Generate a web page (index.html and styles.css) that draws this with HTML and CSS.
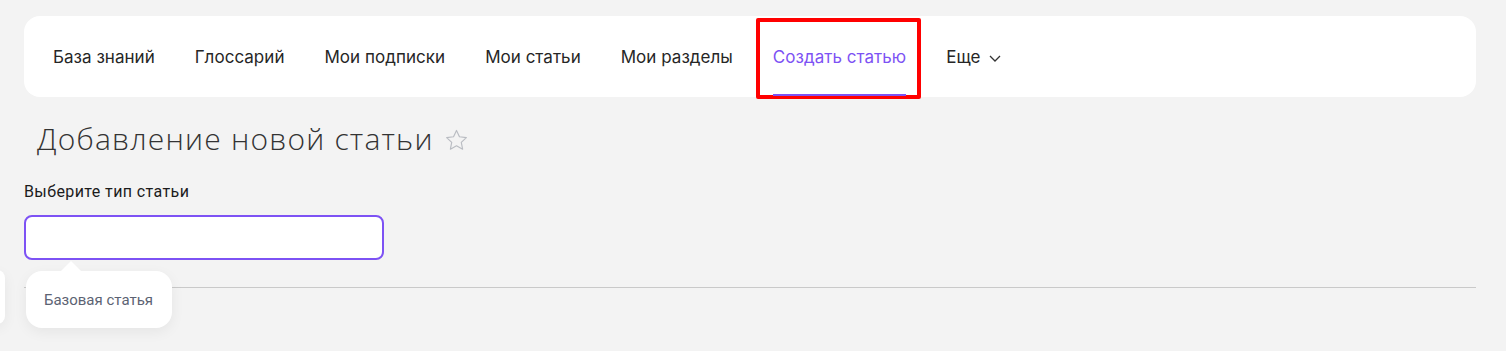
FILE: index.html
```html
<!DOCTYPE html>
<html>
<head>
    <title>Добавление новой статьи</title>
    <link rel="stylesheet" href="styles.css">
</head>
<body>
    <div class="page">
        <nav class="topnav">
            <a class="nav-item">База знаний</a>
            <a class="nav-item">Глоссарий</a>
            <a class="nav-item">Мои подписки</a>
            <a class="nav-item">Мои статьи</a>
            <a class="nav-item">Мои разделы</a>
            <a class="nav-item active">Создать статью<span class="highlight"></span></a>
            <a class="nav-item more">Еще
                <svg width="12" height="7" viewBox="0 0 12 7"><path d="M1 1l5 5 5-5" fill="none" stroke="#333" stroke-width="1.3"/></svg>
            </a>
        </nav>

        <h1 class="title">Добавление новой статьи
            <svg class="star" width="23" height="22" viewBox="0 0 24 23"><path d="M12 1.5l3.1 6.6 7.2.9-5.3 5 1.4 7.1L12 17.6l-6.4 3.5 1.4-7.1-5.3-5 7.2-.9z" fill="none" stroke="#b9bcc2" stroke-width="1.2" stroke-linejoin="round"/></svg>
        </h1>

        <div class="form">
            <div class="field-label">Выберите тип статьи</div>
            <div class="select-box"></div>
            <div class="divider"></div>
            <div class="dropdown">
                <span class="option">Базовая статья</span>
            </div>
        </div>
    </div>
    <div class="side-tab"></div>
</body>
</html>
```

FILE: styles.css
```css
body {
    margin: 0;
    background: #f3f3f3;
    font-family: Inter, "Noto Sans", sans-serif;
    color: #222;
}

.page {
    padding: 16px 30px 60px 24px;
}

.topnav {
    display: flex;
    align-items: center;
    gap: 40px;
    height: 81px;
    padding: 0 29px;
    background: #fff;
    border-radius: 16px;
}

.nav-item {
    position: relative;
    display: flex;
    align-items: center;
    height: 100%;
    font-size: 17px;
    letter-spacing: 0.03px;
    color: #262626;
    cursor: pointer;
}

.nav-item.active {
    color: #7d52f4;
}

.nav-item.active::after {
    content: "";
    position: absolute;
    left: 0;
    right: 0;
    bottom: 1px;
    height: 2px;
    background: #7d52f4;
}

.highlight {
    position: absolute;
    left: -17px;
    right: -15px;
    top: 2px;
    bottom: -2px;
    border: 4px solid #ff0000;
    border-radius: 2px;
}

.nav-item.more svg {
    margin-left: 9px;
    margin-top: 3px;
}

.title {
    display: flex;
    align-items: center;
    margin: 23px 0 0;
    padding-left: 13px;
    height: 36px;
    font-family: "Open Sans", sans-serif;
    font-size: 30px;
    font-weight: 300;
    letter-spacing: 1.2px;
    color: #333;
}

.star {
    margin-left: 11px;
    margin-top: 4px;
}

.form {
    position: relative;
    margin-top: 26px;
}

.field-label {
    font-family: Roboto, sans-serif;
    font-size: 16px;
    line-height: 19px;
    letter-spacing: 0.4px;
    color: #1c1c1c;
}

.select-box {
    box-sizing: border-box;
    margin-top: 14px;
    width: 360px;
    height: 45px;
    background: #fff;
    border: 2px solid #7d52f4;
    border-radius: 8px;
}

.divider {
    margin-top: 27px;
    height: 1px;
    background: #c9c9c9;
}

.dropdown {
    position: absolute;
    top: 89px;
    left: 2px;
    z-index: 5;
    box-sizing: border-box;
    width: 146px;
    height: 57px;
    padding-left: 18px;
    display: flex;
    align-items: center;
    background: #fff;
    border-radius: 16px;
    box-shadow: 0 4px 14px rgba(0, 0, 0, 0.06);
}

.dropdown::before {
    content: "";
    position: absolute;
    top: -10px;
    left: 35px;
    border-left: 10px solid transparent;
    border-right: 10px solid transparent;
    border-bottom: 10px solid #fff;
}

.option {
    font-family: Roboto, sans-serif;
    font-size: 15px;
    color: #5c6373;
}

.side-tab {
    position: absolute;
    left: -12px;
    top: 270px;
    width: 17px;
    height: 54px;
    background: #fff;
    border-radius: 8px;
    box-shadow: 0 4px 14px rgba(0, 0, 0, 0.06);
}
```
